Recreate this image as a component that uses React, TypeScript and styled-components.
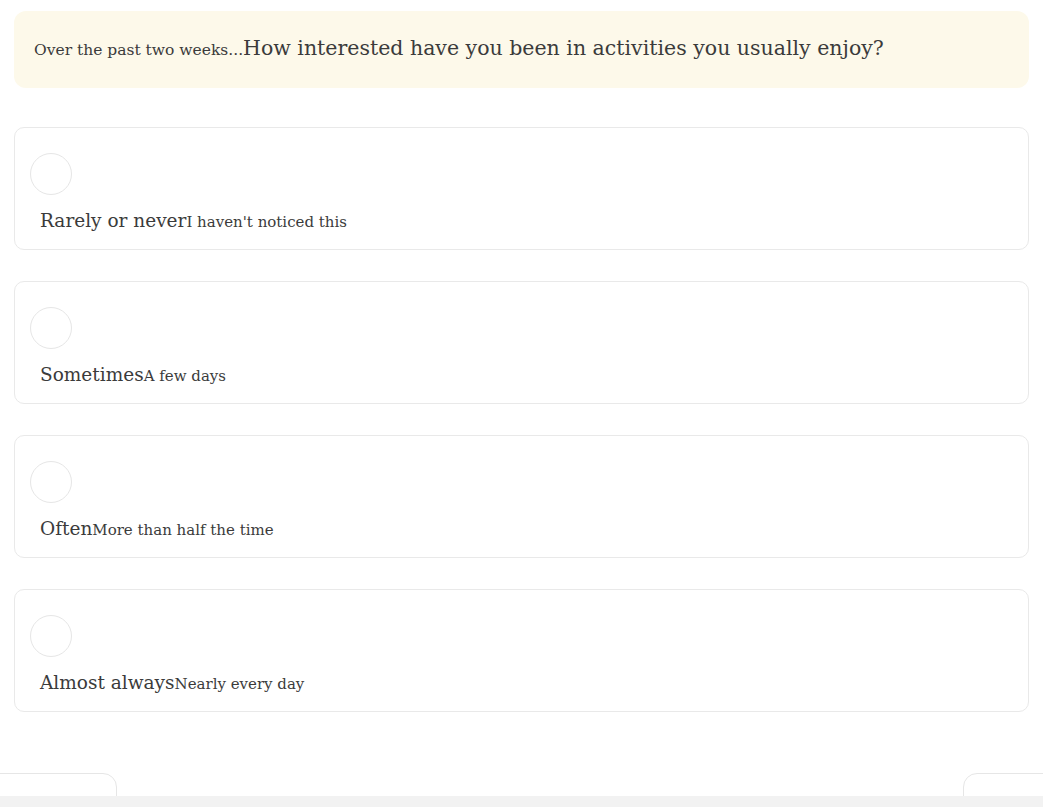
import React from "react";
import styled, { createGlobalStyle } from "styled-components";

const Global = createGlobalStyle`
  html, body { margin: 0; padding: 0; background: #ffffff; overflow: hidden; }
  body { font-family: "DejaVu Serif", "Liberation Serif", serif; color: #3b3b3b; }
`;

const Page = styled.div`
  padding: 11px 14px 0;
  display: flex;
  flex-direction: column;
`;

const QuestionBox = styled.div`
  background: #fdf9ea;
  border-radius: 12px;
  padding: 22px 20px;
  line-height: 31px;
  margin-bottom: 39px;
`;

const Lead = styled.span`
  font-size: 15.5px;
`;

const Prompt = styled.span`
  font-size: 20.5px;
`;

const Options = styled.div`
  display: flex;
  flex-direction: column;
  gap: 31px;
`;

const OptionCard = styled.div`
  border: 1px solid #e9e9e9;
  border-radius: 10px;
  background: #fff;
  padding: 25px 15px 15px;
  display: flex;
  flex-direction: column;
  gap: 14px;
`;

const Radio = styled.div`
  width: 40px;
  height: 40px;
  border-radius: 50%;
  border: 1px solid #e6e6e6;
`;

const OptionText = styled.div`
  padding-left: 10px;
  line-height: 24px;
`;

const Label = styled.span`
  font-size: 18.5px;
`;

const Hint = styled.span`
  font-size: 15px;
`;

const Footer = styled.div`
  display: flex;
  justify-content: space-between;
  margin: 61px -40px 0;
`;

const NavButton = styled.div<{ $w: number }>`
  width: ${(p) => p.$w}px;
  height: 48px;
  border: 1px solid #e6e6e6;
  border-radius: 14px;
  background: #fff;
`;

const BottomBar = styled.div`
  position: fixed;
  left: 0;
  right: 0;
  bottom: 0;
  height: 11px;
  background: #f2f2f2;
`;

const options = [
  { label: "Rarely or never", hint: "I haven't noticed this" },
  { label: "Sometimes", hint: "A few days" },
  { label: "Often", hint: "More than half the time" },
  { label: "Almost always", hint: "Nearly every day" },
];

export default function App() {
  return (
    <>
      <Global />
      <Page>
        <QuestionBox>
          <Lead>Over the past two weeks...</Lead>
          <Prompt>How interested have you been in activities you usually enjoy?</Prompt>
        </QuestionBox>
        <Options>
          {options.map((o) => (
            <OptionCard key={o.label}>
              <Radio />
              <OptionText>
                <Label>{o.label}</Label>
                <Hint>{o.hint}</Hint>
              </OptionText>
            </OptionCard>
          ))}
        </Options>
        <Footer>
          <NavButton $w={141} />
          <NavButton $w={104} />
        </Footer>
      </Page>
      <BottomBar />
    </>
  );
}
